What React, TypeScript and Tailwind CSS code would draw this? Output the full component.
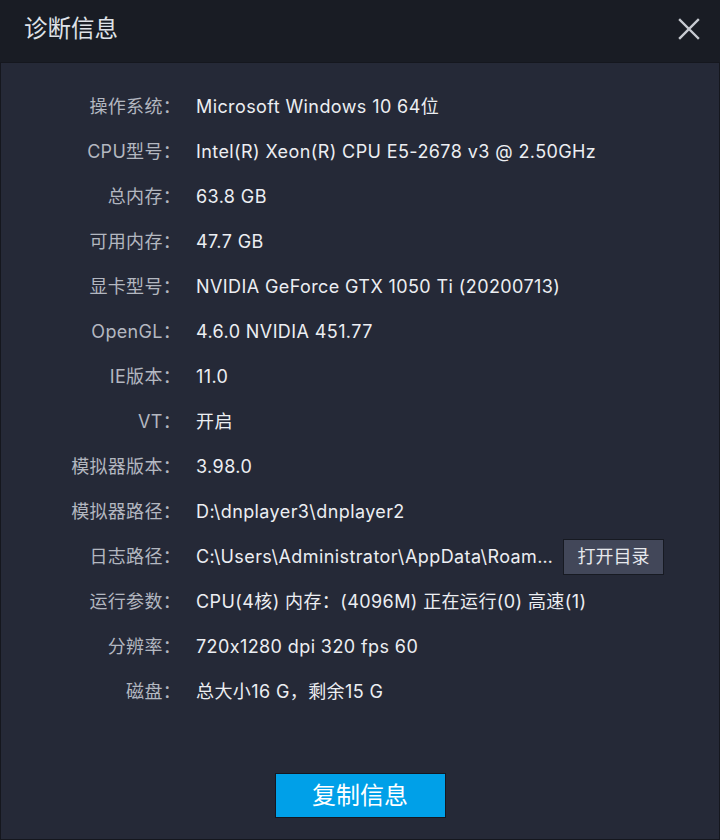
import React from "react";

const rows: [string, string][] = [
  ["操作系统", "Microsoft Windows 10 64位"],
  ["CPU型号", "Intel(R) Xeon(R) CPU E5-2678 v3 @ 2.50GHz"],
  ["总内存", "63.8 GB"],
  ["可用内存", "47.7 GB"],
  ["显卡型号", "NVIDIA GeForce GTX 1050 Ti (20200713)"],
  ["OpenGL", "4.6.0 NVIDIA 451.77"],
  ["IE版本", "11.0"],
  ["VT", "开启"],
  ["模拟器版本", "3.98.0"],
  ["模拟器路径", "D:\\dnplayer3\\dnplayer2"],
  ["日志路径", "C:\\Users\\Administrator\\AppData\\Roaming\\XuanZhi\\log"],
  ["运行参数", "CPU(4核) 内存：(4096M) 正在运行(0) 高速(1)"],
  ["分辨率", "720x1280 dpi 320 fps 60"],
  ["磁盘", "总大小16 G，剩余15 G"],
];

export default function App() {
  return (
    <div
      className="w-[720px] h-[840px] flex flex-col bg-[#191c24] text-[#e6e8ec] [font-feature-settings:'calt'_0]"
      style={{ fontFamily: 'Inter, "Noto Sans CJK SC", sans-serif' }}
    >
      <div className="h-[62px] flex items-center justify-between pl-6 pr-5 pb-1 shrink-0">
        <span className="text-[23.5px] text-[#dfe2e8] leading-none">诊断信息</span>
        <svg width="22" height="22" viewBox="0 0 22 22" className="text-[#c8cbd2]">
          <path d="M2 2L20 20M20 2L2 20" stroke="currentColor" strokeWidth="2.4" strokeLinecap="square" />
        </svg>
      </div>
      <div className="flex-1 flex flex-col bg-[#252937] border border-[#15171e] pt-[21px]">
        <div className="flex flex-col">
          {rows.map(([label, value]) => (
            <div key={label} className="flex items-center h-[45px] text-[18px]">
              <div className="w-[180px] text-right text-[#b3b7c0] shrink-0 tracking-[0.3px]">{label}：</div>
              <div className="ml-[15px] flex items-center tracking-[0.4px]">
                {label === "日志路径" ? (
                  <>
                    <span className="w-[358px] truncate text-[#eceef2]">{value}</span>
                    <button className="ml-[9px] w-[101px] h-[36px] shrink-0 bg-[#424759] border border-[#171a22] text-[#e6e8ec] text-[18px] tracking-normal">
                      打开目录
                    </button>
                  </>
                ) : (
                  <span className="text-[#eceef2] whitespace-nowrap">{value}</span>
                )}
              </div>
            </div>
          ))}
        </div>
        <div className="flex justify-center mt-[59px]">
          <button className="w-[171px] h-[45px] bg-[#00a0e8] border border-[#141720] text-white text-[24px]">
            复制信息
          </button>
        </div>
      </div>
    </div>
  );
}
